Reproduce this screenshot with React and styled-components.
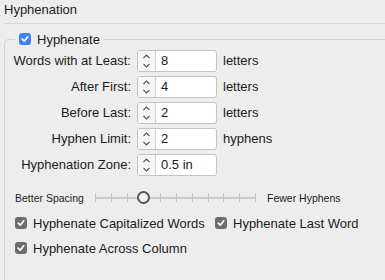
import React from "react";
import styled, { createGlobalStyle } from "styled-components";

const Global = createGlobalStyle`
  html, body {
    margin: 0;
    background: #ededed;
    font-family: "Liberation Sans", Arial, sans-serif;
    color: #1b1b1b;
    overflow: hidden;
  }
`;

const fields = [
  { label: "Words with at Least:", value: "8", unit: "letters" },
  { label: "After First:", value: "4", unit: "letters" },
  { label: "Before Last:", value: "2", unit: "letters" },
  { label: "Hyphen Limit:", value: "2", unit: "hyphens" },
  { label: "Hyphenation Zone:", value: "0.5 in", unit: "" },
];

const options = [
  "Hyphenate Capitalized Words",
  "Hyphenate Last Word",
  "Hyphenate Across Column",
];

const TICKS = 11;

const Check = ({ blue }) => (
  <Box $blue={blue}>
    <svg width="10" height="10" viewBox="0 0 10 10">
      <path
        d="M2.2 5.2 L4.2 7.2 L7.8 2.8"
        fill="none"
        stroke="#fff"
        strokeWidth="1.7"
        strokeLinecap="round"
        strokeLinejoin="round"
      />
    </svg>
  </Box>
);

const Stepper = ({ value }) => (
  <StepBox>
    <Arrows>
      <svg width="9" height="18" viewBox="0 0 9 18">
        <path d="M1.5 6 L4.5 3 L7.5 6" fill="none" stroke="#555" strokeWidth="1.1" />
        <path d="M1.5 12 L4.5 15 L7.5 12" fill="none" stroke="#555" strokeWidth="1.1" />
      </svg>
    </Arrows>
    <Value>{value}</Value>
  </StepBox>
);

const App = () => {
  const knob = 3;
  return (
    <>
      <Global />
      <Panel>
        <Header>Hyphenation</Header>
        <Group>
          <Legend>
            <Check blue />
            <span>Hyphenate</span>
          </Legend>
          <Fields>
            {fields.map((f) => (
              <React.Fragment key={f.label}>
                <Label>{f.label}</Label>
                <Stepper value={f.value} />
                <Unit>{f.unit}</Unit>
              </React.Fragment>
            ))}
          </Fields>
          <SliderRow>
            <Small $width={80}>Better Spacing</Small>
            <Track>
              {Array.from({ length: TICKS }).map((_, i) =>
                i === knob ? <Knob key={i} /> : <Tick key={i} />
              )}
            </Track>
            <Small>Fewer Hyphens</Small>
          </SliderRow>
          <Options>
            {options.map((o) => (
              <Option key={o}>
                <Check />
                <span>{o}</span>
              </Option>
            ))}
          </Options>
        </Group>
      </Panel>
    </>
  );
};

export default App;

const Panel = styled.div`
  width: 385px;
  height: 280px;
  display: flex;
  flex-direction: column;
  overflow: hidden;
`;

const Header = styled.div`
  margin-left: 4px;
  height: 23px;
  line-height: 20px;
  font-size: 13px;
  border-bottom: 1px solid #d6d6d6;
  flex: none;
`;

const Group = styled.fieldset`
  flex: 1;
  margin: 8px 0 0 4px;
  padding: 0;
  min-inline-size: 0;
  border: 1px solid #d3d3d3;
  border-right: none;
  border-bottom: none;
  border-top-left-radius: 5px;
  font-size: 13px;
`;

const Legend = styled.legend`
  margin-left: 10px;
  padding: 0 4px;
  display: flex;
  align-items: center;
  gap: 6px;
  font-size: 13px;
  height: 14px;
`;

const Box = styled.span`
  width: 12px;
  height: 12px;
  border-radius: 3px;
  background: ${(p) => (p.$blue ? "#3a82f7" : "#6d6d6d")};
  display: inline-flex;
  align-items: center;
  justify-content: center;
  flex: none;
`;

const Fields = styled.div`
  display: grid;
  grid-template-columns: 126px 80px auto;
  column-gap: 6px;
  row-gap: 4px;
  align-items: center;
  margin-top: 3.5px;
`;

const Label = styled.div`
  text-align: right;
  white-space: nowrap;
`;

const StepBox = styled.div`
  display: flex;
  height: 22px;
  box-sizing: border-box;
  border: 1px solid #c4c4c4;
  border-radius: 3px;
  background: #fff;
  overflow: hidden;
`;

const Arrows = styled.div`
  width: 17px;
  border-right: 1px solid #d0d0d0;
  background: #f7f7f7;
  display: flex;
  align-items: center;
  justify-content: center;
`;

const Value = styled.div`
  padding-left: 5px;
  line-height: 20px;
`;

const Unit = styled.div``;

const SliderRow = styled.div`
  display: flex;
  align-items: center;
  margin-top: 16px;
  padding-left: 10px;
`;

const Small = styled.span`
  font-size: 10.5px;
  white-space: nowrap;
  width: ${(p) => (p.$width ? `${p.$width}px` : "auto")};
  flex: none;
`;

const Track = styled.div`
  margin-right: 11px;
  width: 161px;
  height: 12px;
  display: flex;
  align-items: center;
  justify-content: space-between;
  background: linear-gradient(#c9c9c9, #c9c9c9) center / 100% 2px no-repeat;
`;

const Tick = styled.span`
  width: 1px;
  height: 9px;
  background: #c4c4c4;
`;

const Knob = styled.span`
  width: 9px;
  height: 9px;
  border: 2px solid #555;
  border-radius: 50%;
  background: #f3f3f3;
  margin: 0 -5px;
`;

const Options = styled.div`
  display: grid;
  grid-template-columns: 200px auto;
  row-gap: 10px;
  margin-top: 12px;
  padding-left: 10px;
`;

const Option = styled.label`
  display: flex;
  align-items: center;
  gap: 6px;
  white-space: nowrap;
`;
